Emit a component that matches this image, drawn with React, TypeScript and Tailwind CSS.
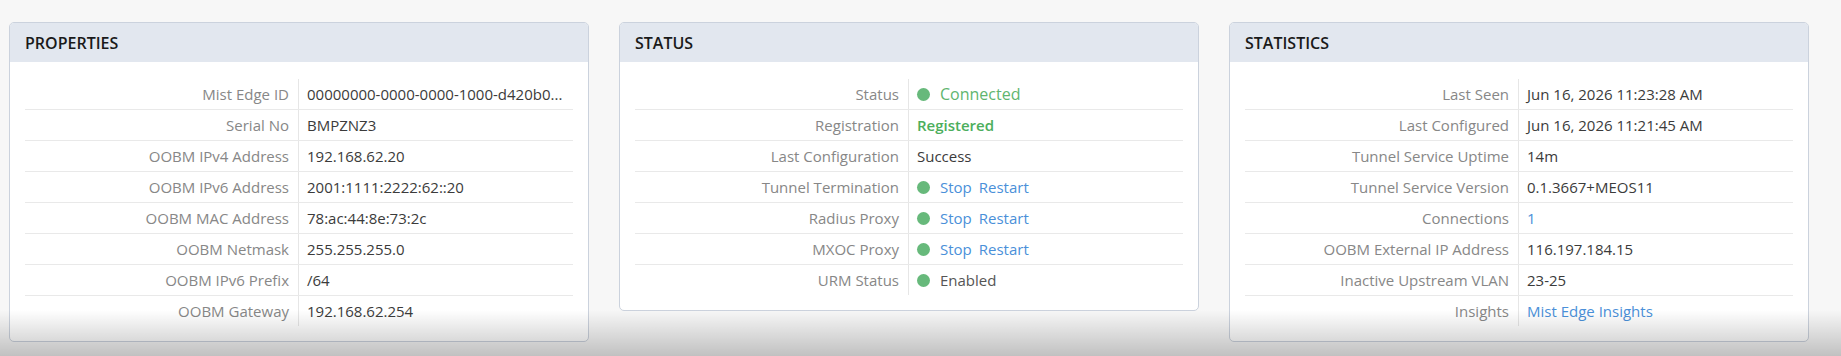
import React from 'react';

interface Row {
    label: string;
    value: React.ReactNode;
}

const Dot: React.FC = () => (
    <span className="mr-[10px] inline-block h-[13px] w-[13px] shrink-0 rounded-full bg-[#67b97b]" />
);

const Links: React.FC = () => (
    <span className="flex items-center">
        <Dot />
        <span className="mr-[7px] text-[#4a90d9]">Stop</span>
        <span className="text-[#4a90d9]">Restart</span>
    </span>
);

const properties: Row[] = [
    { label: 'Mist Edge ID', value: '00000000-0000-0000-1000-d420b0...' },
    { label: 'Serial No', value: 'BMPZNZ3' },
    { label: 'OOBM IPv4 Address', value: '192.168.62.20' },
    { label: 'OOBM IPv6 Address', value: '2001:1111:2222:62::20' },
    { label: 'OOBM MAC Address', value: '78:ac:44:8e:73:2c' },
    { label: 'OOBM Netmask', value: '255.255.255.0' },
    { label: 'OOBM IPv6 Prefix', value: '/64' },
    { label: 'OOBM Gateway', value: '192.168.62.254' },
];

const status: Row[] = [
    {
        label: 'Status',
        value: (
            <span className="flex items-center">
                <Dot />
                <span className="text-[16px] text-[#5fb56f]">Connected</span>
            </span>
        ),
    },
    { label: 'Registration', value: <span className="font-semibold text-[#4cae5c]">Registered</span> },
    { label: 'Last Configuration', value: 'Success' },
    { label: 'Tunnel Termination', value: <Links /> },
    { label: 'Radius Proxy', value: <Links /> },
    { label: 'MXOC Proxy', value: <Links /> },
    {
        label: 'URM Status',
        value: (
            <span className="flex items-center">
                <Dot />
                <span className="text-[#555]">Enabled</span>
            </span>
        ),
    },
];

const statistics: Row[] = [
    { label: 'Last Seen', value: 'Jun 16, 2026 11:23:28 AM' },
    { label: 'Last Configured', value: 'Jun 16, 2026 11:21:45 AM' },
    { label: 'Tunnel Service Uptime', value: '14m' },
    { label: 'Tunnel Service Version', value: '0.1.3667+MEOS11' },
    { label: 'Connections', value: <span className="text-[#4a90d9]">1</span> },
    { label: 'OOBM External IP Address', value: '116.197.184.15' },
    { label: 'Inactive Upstream VLAN', value: '23-25' },
    { label: 'Insights', value: <span className="text-[#4a90d9]">Mist Edge Insights</span> },
];

const Card: React.FC<{ title: string; rows: Row[] }> = ({ title, rows }) => (
    <div className="w-[580px] shrink-0 self-start overflow-hidden rounded-[5px] border border-[#cbd2dd] bg-white">
        <div className="flex h-[39px] items-center bg-[#e2e7ef] px-[15px] text-[16px] font-semibold text-[#1a1a1a]">
            {title}
        </div>
        <div className="px-[15px] pt-[17px] pb-[15px]">
            {rows.map((r, i) => (
                <div
                    key={r.label}
                    className={
                        i < rows.length - 1
                            ? 'flex h-[31px] border-b border-[#e9e9e9]'
                            : 'flex h-[30px]'
                    }
                >
                    <div className="flex w-1/2 items-center justify-end border-r border-[#e6e6e6] pr-[9px] text-[#878787]">
                        {r.label}
                    </div>
                    <div className="flex min-w-0 flex-1 items-center whitespace-nowrap pl-[8px] text-[#3b3b3b]">
                        {r.value}
                    </div>
                </div>
            ))}
        </div>
    </div>
);

const App: React.FC = () => {
    return (
        <div className="relative h-[356px] w-full overflow-hidden bg-[#f7f7f7] font-['Open_Sans',sans-serif] text-[15px]">
            <div className="flex gap-[30px] pt-[22px] pl-[9px]">
                <Card title="PROPERTIES" rows={properties} />
                <Card title="STATUS" rows={status} />
                <Card title="STATISTICS" rows={statistics} />
            </div>
            <div className="pointer-events-none absolute inset-x-0 bottom-0 h-[46px] bg-linear-to-b from-black/0 to-black/[0.22]" />
        </div>
    );
};

export default App;
